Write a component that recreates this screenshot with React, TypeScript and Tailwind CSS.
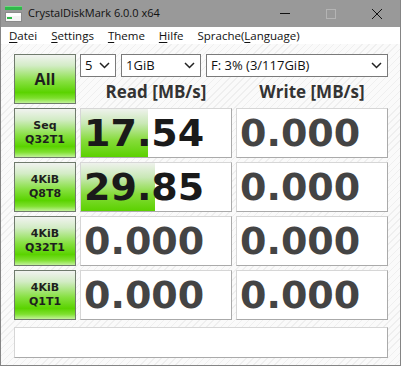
import React from "react";

type Row = { top: string; bottom: string; read: string; write: string; bar: number };

const rows: Row[] = [
  { top: "Seq", bottom: "Q32T1", read: "17.54", write: "0.000", bar: 67 },
  { top: "4KiB", bottom: "Q8T8", read: "29.85", write: "0.000", bar: 74 },
  { top: "4KiB", bottom: "Q32T1", read: "0.000", write: "0.000", bar: 0 },
  { top: "4KiB", bottom: "Q1T1", read: "0.000", write: "0.000", bar: 0 },
];

const greenBtn =
  "border border-[#6f7a6c] bg-[linear-gradient(to_bottom,#f1f3f0_0%,#d3ecc6_22%,#86e040_55%,#5ad300_78%,#7fe030_90%,#c2f29a_100%)] text-[#1e1e1e] font-bold flex flex-col items-center justify-center";

const sunken = "border border-t-[#d6d6d6] border-l-[#d6d6d6] border-b-[#aaaaaa] border-r-[#aaaaaa] bg-white";

function Chevron() {
  return (
    <svg width="11" height="7" viewBox="0 0 11 7" className="shrink-0">
      <polyline points="1,1 5.5,5.5 10,1" fill="none" stroke="#222" strokeWidth="1.5" />
    </svg>
  );
}

function Select({ w, label }: { w: string; label: string }) {
  return (
    <div className={`${w} h-[23px] border border-[#7a7a7a] bg-white flex items-center justify-between pl-[4px] pr-[5px] text-[13px] text-[#111] font-['Open_Sans',sans-serif]`}>
      <span>{label}</span>
      <Chevron />
    </div>
  );
}

function Value({ text, bar }: { text: string; bar?: number }) {
  const zero = text === "0.000";
  return (
    <div className={`relative h-[50px] ${sunken} flex items-center overflow-hidden`}>
      {bar ? (
        <div
          className="absolute left-0 top-0 bottom-0 bg-[linear-gradient(to_bottom,#eef2ec_0%,#c9e8b6_30%,#86dc3a_65%,#5bd100_100%)]"
          style={{ width: bar }}
        />
      ) : null}
      <span
        className={`relative pl-[3px] font-['DejaVu_Sans',sans-serif] font-bold text-[38px] leading-none ${zero ? "text-[#444444]" : "text-[#1a1a1a]"}`}
      >
        {text}
      </span>
    </div>
  );
}

function Menu({ first, rest }: { first: string; rest: string }) {
  return (
    <span>
      <span className="underline underline-offset-2">{first}</span>
      {rest}
    </span>
  );
}

export default function App() {
  return (
    <div className="w-[405px] h-[372px] bg-white">
      <div className="w-[401px] h-[366px] flex flex-col border-x border-b border-[#858585]">
        {/* Title bar */}
        <div className="h-[27px] bg-[#999999] flex items-center">
          <svg width="18" height="17" viewBox="0 0 18 17" className="ml-[4px] mt-[1px]">
            <rect x="0" y="0" width="17" height="4" fill="#2fb84a" />
            <rect x="0" y="0" width="17" height="1" fill="#6fd67f" />
            <rect x="0.5" y="6.5" width="16" height="9" fill="#f4f4f4" stroke="#8a8a8a" />
            <rect x="1" y="7" width="15" height="3" fill="#ffffff" />
            <rect x="2" y="11" width="5" height="2" fill="#2fb84a" />
          </svg>
          <span className="ml-[5px] text-[11px] text-[#111] font-['Open_Sans',sans-serif]">
            CrystalDiskMark 6.0.0 x64
          </span>
          <div className="ml-auto flex items-center h-full">
            <div className="w-[46px] h-full flex items-center justify-center">
              <div className="w-[10px] h-px bg-[#111]" />
            </div>
            <div className="w-[46px] h-full flex items-center justify-center">
              <div className="w-[10px] h-[10px] border border-[#b4b4b4]" />
            </div>
            <div className="w-[46px] h-full flex items-center justify-center">
              <svg width="12" height="12" viewBox="0 0 12 12">
                <path d="M1 1 L11 11 M11 1 L1 11" stroke="#111" strokeWidth="1" />
              </svg>
            </div>
          </div>
        </div>

        {/* Menu bar */}
        <div className="h-[17px] bg-white flex items-center gap-[14px] pl-[8px] text-[11.5px] text-[#111] font-['Open_Sans',sans-serif] leading-none">
          <Menu first="D" rest="atei" />
          <Menu first="S" rest="ettings" />
          <Menu first="T" rest="heme" />
          <Menu first="H" rest="ilfe" />
          <span>
            Sprache(<span className="underline underline-offset-2">L</span>anguage)
          </span>
        </div>

        {/* Client area */}
        <div className="flex-1 pl-[13px] pt-[10px] bg-[repeating-linear-gradient(135deg,#efefef_0px,#efefef_1px,#fafafa_1px,#fafafa_5px)]">
          <div className="grid grid-cols-[62px_152px_152px] gap-1">
            <div className={`${greenBtn} h-[50px] text-[16px] leading-none font-['Open_Sans',sans-serif]`}>All</div>
            <div className="col-span-2 flex flex-col">
              <div className="flex gap-[5px]">
                <Select w="w-[36px]" label="5" />
                <Select w="w-[80px]" label="1GiB" />
                <Select w="w-[182px]" label="F: 3% (3/117GiB)" />
              </div>
              <div className="grid grid-cols-2 gap-1 flex-1 items-center font-['Open_Sans',sans-serif] font-bold text-[17px] text-[#333] leading-none pt-[1px]">
                <div className="text-center">Read [MB/s]</div>
                <div className="text-center">Write [MB/s]</div>
              </div>
            </div>

            {rows.map((r, i) => (
              <React.Fragment key={i}>
                <div className={`${greenBtn} h-[50px] text-[11px] leading-[14px] font-['DejaVu_Sans',sans-serif]`}>
                  <span className="block">{r.top}</span>
                  <span className="block">{r.bottom}</span>
                </div>
                <Value text={r.read} bar={r.bar} />
                <Value text={r.write} />
              </React.Fragment>
            ))}
          </div>

          <div className={`mt-[7px] w-[374px] h-[31px] ${sunken}`} />
        </div>
      </div>
    </div>
  );
}
